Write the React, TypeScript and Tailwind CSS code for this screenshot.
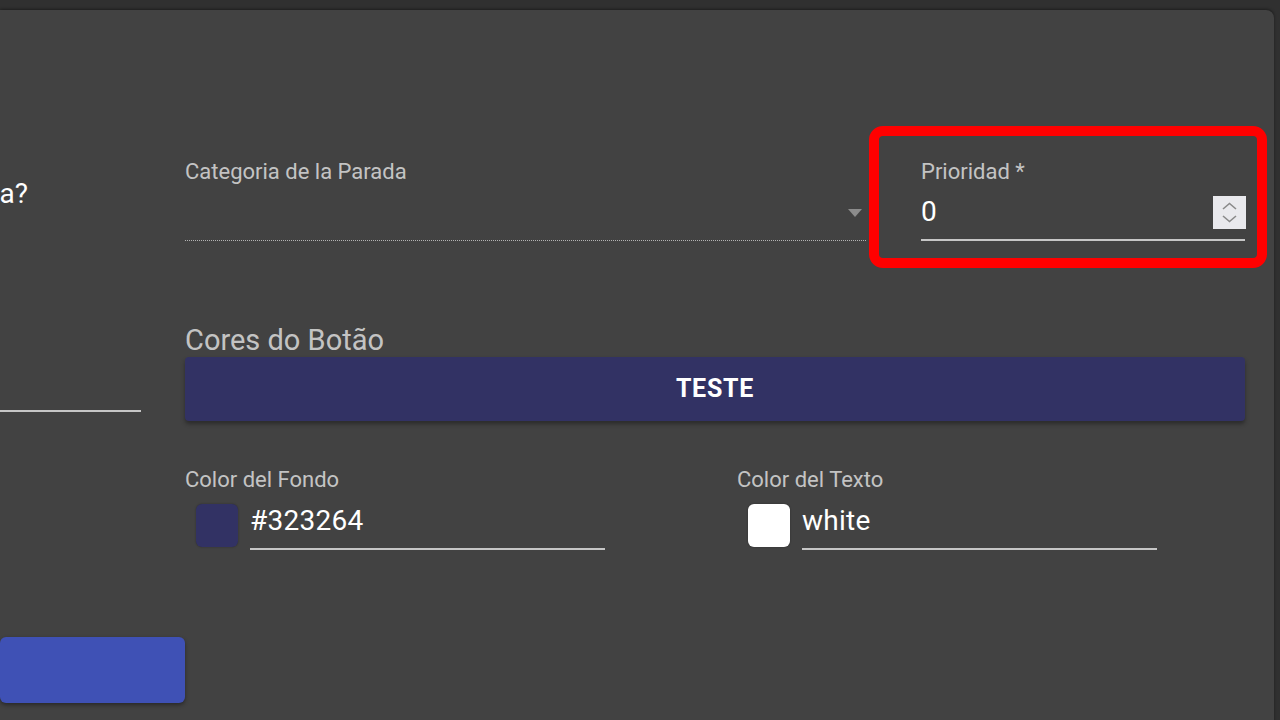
const font = { fontFamily: 'Roboto, "Noto Sans", sans-serif' };

function ColorField({ label, swatch, value }: { label: string; swatch: string; value: string }) {
  return (
    <div className="flex flex-col">
      <div className="h-[24px] text-[22px] leading-[24px] text-white/70">{label}</div>
      <div className="mt-[12px] flex items-start">
        <div className={`ml-[11px] h-[43px] w-[42px] shrink-0 rounded-[6px] shadow-[0_0_2px_rgba(0,0,0,0.35)] ${swatch}`} />
        <div className="ml-[12px] h-[46px] w-[355px] border-b-2 border-white/70 pt-[1px] text-[28px] leading-[32px] tracking-[0.01em] text-white">
          {value}
        </div>
      </div>
    </div>
  );
}

function Spinner() {
  return (
    <svg width="33" height="33" viewBox="0 0 33 33" className="mr-[-1px] shrink-0">
      <rect width="33" height="33" fill="#e9e9ed" />
      <path d="M10 13l6.5-5.5L23 13" fill="none" stroke="#8a8a8a" strokeWidth="1.6" />
      <path d="M10 20l6.5 5.5L23 20" fill="none" stroke="#8a8a8a" strokeWidth="1.6" />
    </svg>
  );
}

export default function App() {
  return (
    <div className="h-[720px] w-[1280px] overflow-hidden bg-[#303030] pr-[6px] pt-[10px]" style={font}>
      <div className="h-[760px] overflow-hidden rounded-tr-[8px] bg-[#424242] shadow-[0_-1px_3px_rgba(0,0,0,0.4)]">
        <div className="flex">
          {/* Left column (scrolled out of view) */}
          <div className="flex w-[141px] shrink-0 flex-col pt-[168px]">
            <div className="flex w-[28px] justify-end">
              <span className="shrink-0 whitespace-nowrap text-[28px] leading-[32px] text-white">
                ¿Es una parada obligatoria?
              </span>
            </div>
            <div className="h-[202px] border-b-2 border-white/70" />
            <button className="mt-[225px] h-[66px] w-[185px] shrink-0 rounded-[6px] bg-[#3f51b5] shadow-[0_2px_4px_rgba(0,0,0,0.4)]" />
          </div>

          {/* Right column */}
          <div className="ml-[44px] flex w-[1060px] shrink-0 flex-col pt-[150px]">
            <div className="flex items-start">
              <div className="flex w-[681px] flex-col">
                <div className="h-[24px] text-[22px] leading-[24px] text-white/70">Categoria de la Parada</div>
                <div className="flex h-[57px] items-center justify-end border-b border-dotted border-white/60 pr-[4px] pt-[2px]">
                  <svg width="14" height="8" viewBox="0 0 14 8">
                    <path d="M0 0h14L7 8z" fill="#8c8c8c" />
                  </svg>
                </div>
              </div>

              <div className="relative ml-[55px] flex w-[324px] flex-col">
                <div className="h-[24px] text-[22px] leading-[24px] text-white/70">Prioridad *</div>
                <div className="flex h-[57px] items-start justify-between border-b-2 border-white/70 pt-[12px]">
                  <span className="text-[28px] leading-[32px] text-white">0</span>
                  <Spinner />
                </div>
                <div className="pointer-events-none absolute left-[-52px] top-[-34px] h-[142px] w-[398px] rounded-[14px] border-[10px] border-[#ff0000]" />
              </div>
            </div>

            <div className="mt-[83px] text-[29px] leading-[32px] text-white/70">Cores do Botão</div>
            <button className="mt-[1px] h-[64px] w-full rounded-[4px] bg-[#323264] text-[25px] font-bold tracking-[0.03em] text-white shadow-[0_3px_4px_rgba(0,0,0,0.35)]">
              TESTE
            </button>

            <div className="mt-[47px] flex">
              <div className="w-[552px]">
                <ColorField label="Color del Fondo" swatch="bg-[#323264]" value="#323264" />
              </div>
              <ColorField label="Color del Texto" swatch="bg-white" value="white" />
            </div>
          </div>
        </div>
      </div>
    </div>
  );
}
